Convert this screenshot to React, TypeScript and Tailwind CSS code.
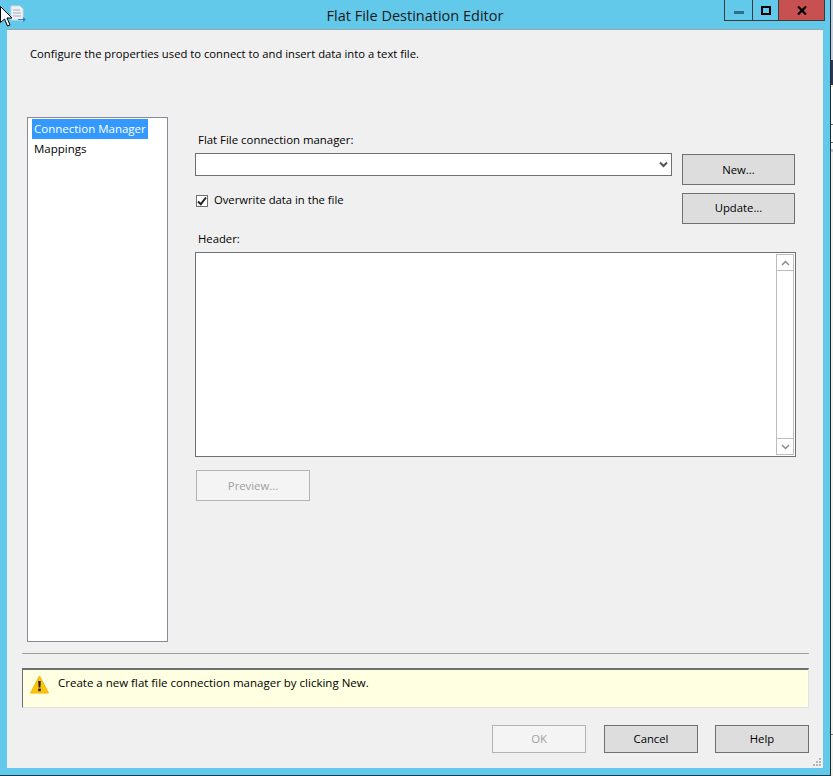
const font = "font-['Open_Sans','Liberation_Sans',sans-serif]";

const AppIcon = () => (
  <svg width="18" height="18" viewBox="0 0 18 18" className="shrink-0">
    <path d="M3 1h9l3 3v11H3z" fill="#eef2f5" stroke="#cfd7de" />
    <path d="M5 5h7M5 8h8M5 11h8" stroke="#a3aeb9" strokeWidth="1" />
    <path d="M10 14h5v-2l3 2.5-3 2.5v-2h-5z" fill="#3f78c9" />
  </svg>
);

const Cursor = () => (
  <svg width="12" height="22" viewBox="0 0 12 22" className="absolute left-0 top-[6px]">
    <path d="M.5.5v16l4-3.5 3 7 2.5-1-3-7h5z" fill="#fff" stroke="#000" strokeWidth="1" />
  </svg>
);

const WarnIcon = () => (
  <svg width="19" height="19" viewBox="0 0 19 19">
    <path d="M9.5 1 18.5 18H.5z" fill="#fdc40f" stroke="#f5b400" strokeLinejoin="round" />
    <path d="M8.2 6h2.6l-.4 6.5H8.6z" fill="#222" />
    <rect x="8.2" y="13.6" width="2.6" height="2.6" fill="#222" />
  </svg>
);

const Btn = ({ label, w, h, off, low }: { label: string; w: string; h: string; off?: boolean; low?: boolean }) => (
  <button
    className={
      (low ? "pt-[1px] " : "") +
      (off
        ? `${w} ${h} border border-[#b3b3b3] bg-[#f4f4f4] text-[#a0a0a0] text-[11.3px]`
        : `${w} ${h} border border-[#707070] bg-[#dddddd] text-black text-[11.3px]`)
    }
  >
    {label}
  </button>
);

const App = () => {
  return (
    <div className={`${font} relative w-[833px] h-[776px] overflow-hidden flex bg-[#62c9eb] text-[11.3px] text-black`}>
      <div className="w-[830px] h-[776px] flex flex-col">
        {/* title bar */}
        <div className="h-[29px] flex shrink-0">
          <div className="w-[8px]" />
          <div className="mt-[5px]">
            <AppIcon />
          </div>
          <div className="flex-1 text-center text-[14.5px] pt-[5px] pl-[80px] text-[#1a1a1a]">
            Flat File Destination Editor
          </div>
          <div className="w-[101px] h-[21px] flex border-x border-b border-[#3a3a3a] mr-[5px]">
            <div className="w-[28px] flex items-center justify-center border-r border-[#3a3a3a]">
              <div className="w-[10px] h-[3px] mt-[4px] bg-[#2f6f8a]" />
            </div>
            <div className="w-[26px] flex items-center justify-center border-r border-[#3a3a3a]">
              <div className="w-[10px] h-[9px] border-2 border-black" />
            </div>
            <div className="flex-1 flex items-center justify-center bg-[#c75050]">
              <svg width="10" height="9" viewBox="0 0 10 9">
                <path d="M1 .5 9 8.5M9 .5 1 8.5" stroke="#000" strokeWidth="2.2" />
              </svg>
            </div>
          </div>
        </div>

        {/* client area */}
        <div className="relative ml-[7px] mr-[7px] h-[739px] bg-[#f0f0f0] border-t border-[#9aa7ad] flex flex-col">
          <div className="pl-[23px] pt-[16px] h-[87px] shrink-0 text-[11.25px]">Configure the properties used to connect to and insert data into a text file.</div>

          <div className="flex h-[525px] shrink-0">
            {/* page list */}
            <div className="ml-[20px] w-[141px] h-[525px] border border-[#858c94] bg-white p-[1px] pl-[4px] text-[11.5px]">
              <div className="w-[116px] h-[20px] leading-[20px] bg-[#3399ff] text-white pl-[2px] whitespace-nowrap">Connection Manager</div>
              <div className="h-[20px] leading-[20px] pl-[2px]">Mappings</div>
            </div>

            {/* form */}
            <div className="ml-[27px] w-[601px] flex flex-col">
              <div className="pl-[3px] pt-[14px] h-[36px] shrink-0 text-[11.4px]">Flat File connection manager:</div>
              <div className="flex h-[99px] shrink-0">
                <div className="w-[477px] shrink-0">
                  <div className="h-[23px] border border-[#707070] bg-white flex items-center justify-end pr-[3px]">
                    <svg width="9" height="7" viewBox="0 0 9 7">
                      <path d="M1 1.5 4.5 5 8 1.5" fill="none" stroke="#555" strokeWidth="2" />
                    </svg>
                  </div>
                  <div className="flex items-center mt-[19px] ml-[1px] h-[12px]">
                    <div className="w-[12px] h-[12px] border border-[#707070] bg-white flex items-center justify-center">
                      <svg width="10" height="10" viewBox="0 0 10 10">
                        <path d="M1 5.5 3.8 8.2 9 1.5" fill="none" stroke="#222" strokeWidth="2" />
                      </svg>
                    </div>
                    <span className="ml-[6px] -mt-[1px] text-[11.25px]">Overwrite data in the file</span>
                  </div>
                  <div className="mt-[24px] pl-[3px]">Header:</div>
                </div>
                <div className="ml-[10px] pt-[1px] flex flex-col gap-[8px]">
                  <Btn label="New..." w="w-[113px]" h="h-[31px]" low />
                  <Btn label="Update..." w="w-[113px]" h="h-[31px]" />
                </div>
              </div>

              {/* header text box */}
              <div className="h-[205px] shrink-0 border border-[#707070] bg-white flex justify-end p-[1px]">
                <div className="w-[18px] h-full border border-[#bdbdbd] flex flex-col justify-between">
                  <div className="h-[16px] border-b border-[#bdbdbd] flex items-center justify-center">
                    <svg width="9" height="6" viewBox="0 0 9 6">
                      <path d="M1 5 4.5 1.5 8 5" fill="none" stroke="#8a8a8a" strokeWidth="1.5" />
                    </svg>
                  </div>
                  <div className="h-[16px] border-t border-[#bdbdbd] flex items-center justify-center">
                    <svg width="9" height="6" viewBox="0 0 9 6">
                      <path d="M1 1 4.5 4.5 8 1" fill="none" stroke="#8a8a8a" strokeWidth="1.5" />
                    </svg>
                  </div>
                </div>
              </div>

              <div className="mt-[13px] ml-[1px]">
                <Btn label="Preview..." w="w-[114px]" h="h-[31px]" off low />
              </div>
            </div>
          </div>

          {/* footer */}
          <div className="mt-[11px] ml-[15px] w-[787px] h-[1px] bg-[#a0a0a0] shrink-0" />
          <div className="mt-[14px] ml-[15px] w-[787px] h-[40px] shrink-0 bg-[#ffffe1] border-t-2 border-l border-r border-b border-t-[#6e6e6e] border-l-[#6e6e6e] border-r-[#e3e3e3] border-b-[#e3e3e3] flex">
            <div className="ml-[7px] mt-[5px]">
              <WarnIcon />
            </div>
            <div className="ml-[9px] mt-[4px] text-[11.5px]">Create a new flat file connection manager by clicking New.</div>
          </div>
          <div className="mt-[17px] ml-[485px] flex">
            <Btn label="OK" w="w-[94px]" h="h-[28px]" off />
            <div className="ml-[18px]">
              <Btn label="Cancel" w="w-[94px]" h="h-[28px]" />
            </div>
            <div className="ml-[17px]">
              <Btn label="Help" w="w-[94px]" h="h-[28px]" />
            </div>
          </div>

          {/* resize grip */}
          <svg width="10" height="10" viewBox="0 0 10 10" className="absolute right-[1px] bottom-[1px]">
            <path d="M7 1h2v2H7zM4 4h2v2H4zM7 4h2v2H7zM1 7h2v2H1zM4 7h2v2H4zM7 7h2v2H7z" fill="#b5b5b5" />
          </svg>
        </div>
      </div>

      {/* desktop behind the window */}
      <div className="w-[1px] h-[776px] bg-[#1c2b33]" />
      <div className="w-[2px] h-[776px] flex flex-col bg-[#f4f2e6]">
        <div className="h-[60px] shrink-0 bg-[#c9d3e0]" />
        <div className="h-[25px] shrink-0 bg-[#2b3a55]" />
        <div className="h-[2px] shrink-0 bg-[#f7ecaa]" />
        <div className="h-[38px] shrink-0 bg-white border-b border-[#777777]" />
        <div className="h-[18px] shrink-0 bg-white border-b border-[#777777]" />
        <div className="h-[6px] shrink-0 bg-white" />
        <div className="h-[3px] shrink-0 bg-[#c9c9d9]" />
        <div className="h-[583px] shrink-0 border-b border-[#888888]" />
      </div>
      <div className="absolute left-0 bottom-0 w-[830px] h-[1px] bg-[#1d3a4a]" />
      <Cursor />
    </div>
  );
};

export default App;
